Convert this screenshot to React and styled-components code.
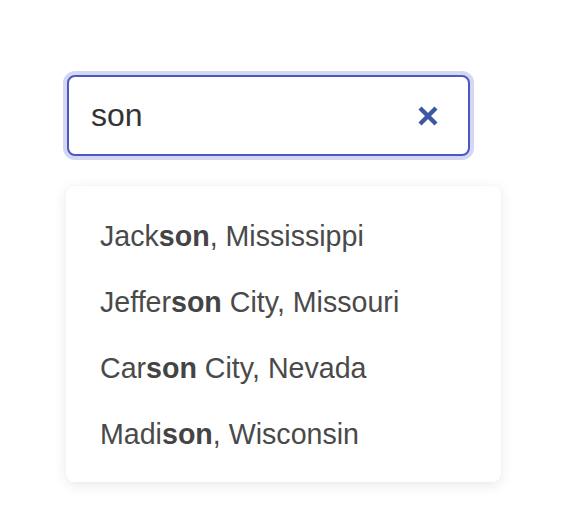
import React, { useState } from "react";
import styled, { createGlobalStyle } from "styled-components";

const GlobalStyle = createGlobalStyle`
  html, body {
    margin: 0;
    padding: 0;
    background: #fff;
    font-family: "Liberation Sans", Arial, sans-serif;
  }
`;

const Page = styled.div`
  width: 568px;
  height: 520px;
  box-sizing: border-box;
  padding: 75px 0 0 66px;
  display: flex;
  flex-direction: column;
  gap: 30px;
`;

const SearchBox = styled.div`
  margin-left: 1px;
  width: 403px;
  height: 81px;
  box-sizing: border-box;
  display: flex;
  align-items: center;
  padding: 0 30px 0 22px;
  border: 2px solid #4b58c4;
  border-radius: 8px;
  box-shadow: ${(p) => (p.$focused ? "0 0 0 4px #d4d7f1" : "none")};
  background: #fff;
`;

const SearchInput = styled.input`
  flex: 1;
  min-width: 0;
  border: none;
  outline: none;
  padding: 0;
  background: transparent;
  font-family: "Liberation Sans", Arial, sans-serif;
  font-size: 32px;
  color: #333;
`;

const ClearButton = styled.button`
  width: 20px;
  height: 20px;
  border: none;
  background: none;
  padding: 0;
  display: flex;
  align-items: center;
  justify-content: center;
  cursor: pointer;
  color: #3b58a0;
`;

const Dropdown = styled.ul`
  list-style: none;
  margin: 0;
  width: 435px;
  box-sizing: border-box;
  padding: 17px 0 15px;
  background: #fff;
  border-radius: 8px;
  box-shadow: 0 3px 14px rgba(0, 0, 0, 0.09), 0 0 2px rgba(0, 0, 0, 0.04);
`;

const Option = styled.li`
  height: 66px;
  line-height: 66px;
  padding-left: 34px;
  font-size: 28.6px;
  color: #4a4a4a;
  white-space: nowrap;
  cursor: pointer;
`;

const Match = styled.b`
  font-weight: 700;
  color: #444;
`;

const cities = [
  "Jackson, Mississippi",
  "Jefferson City, Missouri",
  "Carson City, Nevada",
  "Madison, Wisconsin",
];

const highlight = (text, query) => {
  const i = text.toLowerCase().indexOf(query.toLowerCase());
  if (!query || i < 0) return text;
  return (
    <>
      {text.slice(0, i)}
      <Match>{text.slice(i, i + query.length)}</Match>
      {text.slice(i + query.length)}
    </>
  );
};

const App = () => {
  const [query, setQuery] = useState("son");
  const results = cities.filter((c) =>
    c.toLowerCase().includes(query.toLowerCase())
  );

  return (
    <Page>
      <GlobalStyle />
      <SearchBox $focused>
        <SearchInput value={query} onChange={(e) => setQuery(e.target.value)} />
        <ClearButton onClick={() => setQuery("")} aria-label="clear">
          <svg width="20" height="20" viewBox="0 0 20 20">
            <path
              d="M2 2 L18 18 M18 2 L2 18"
              stroke="currentColor"
              strokeWidth="4.4"
              strokeLinecap="butt"
            />
          </svg>
        </ClearButton>
      </SearchBox>
      {query && results.length > 0 && (
        <Dropdown>
          {results.map((c) => (
            <Option key={c}>{highlight(c, query)}</Option>
          ))}
        </Dropdown>
      )}
    </Page>
  );
};

export default App;
